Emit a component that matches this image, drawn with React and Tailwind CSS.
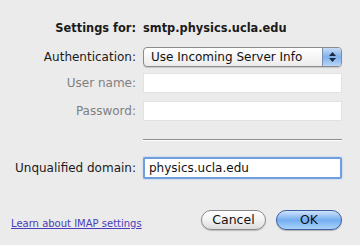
import React from 'react'

const Label = ({ children, dim }) => (
    <div className={`text-right text-[12px] leading-none pr-0 ${dim ? 'text-[#808080]' : 'text-[#1a1a1a]'}`}>{children}</div>
)

const App = () => {
    return (
        <main
            className="w-[360px] h-[245px] bg-[#ebebeb] relative overflow-hidden"
            style={{ fontFamily: '"DejaVu Sans", "Liberation Sans", sans-serif' }}
        >
            <div className="grid grid-cols-[136px_199px] gap-x-[7px] items-center pt-[21px]">
                {/* header */}
                <div className="text-right text-[11.4px] font-bold text-[#1a1a1a] h-[14px] leading-[14px]">Settings for:</div>
                <div className="text-[11.4px] font-bold text-[#1a1a1a] h-[14px] leading-[14px]">smtp.physics.ucla.edu</div>

                {/* authentication */}
                <div className="mt-[12px] text-right text-[12px] text-[#1a1a1a]">Authentication:</div>
                <div className="mt-[12px] h-[20px] flex rounded-[4px] border border-[#8c8c8c] bg-gradient-to-b from-white to-[#ececec] shadow-[0_1px_1px_rgba(0,0,0,0.15)] overflow-hidden">
                    <div className="flex-1 text-[12px] leading-[18px] pl-[7px] text-[#111]">Use Incoming Server Info</div>
                    <div className="w-[19px] border-l border-[#7b8fb5] bg-gradient-to-b from-[#c7dcf6] via-[#7fb0ea] to-[#b9d6f6] flex flex-col items-center justify-center gap-[2px]">
                        <svg width="7" height="4" viewBox="0 0 7 4"><path d="M3.5 0 L7 4 L0 4 Z" fill="#1b2a44" /></svg>
                        <svg width="7" height="4" viewBox="0 0 7 4"><path d="M0 0 L7 0 L3.5 4 Z" fill="#1b2a44" /></svg>
                    </div>
                </div>

                {/* user name */}
                <div className="mt-[6px]"><Label dim>User name:</Label></div>
                <div className="mt-[6px] h-[20px] bg-white border border-[#e2e2e2]" />

                {/* password */}
                <div className="mt-[8px]"><Label dim>Password:</Label></div>
                <div className="mt-[8px] h-[20px] bg-white border border-[#e2e2e2]" />

                {/* separator */}
                <div className="mt-[18px]" />
                <div className="mt-[18px] h-[1px] bg-[#8e8e8e] border-b border-white box-content" />

                {/* unqualified domain */}
                <div className="mt-[16px] text-right text-[12px] text-[#1a1a1a]">Unqualified domain:</div>
                <div className="mt-[16px] h-[22px] bg-white border-2 border-[#6f9fdc] rounded-[2px] shadow-[0_0_2px_#9cc0ee] text-[12px] leading-[18px] pl-[4px] text-[#111]">physics.ucla.edu</div>
            </div>

            <div className="flex items-center mt-[31px] pl-[11px] pr-[18px]">
                <a className="text-[10px] text-[#4a3cb8] underline flex-1 leading-none pt-[8px]">Learn about IMAP settings</a>
                <button className="w-[65px] h-[20px] rounded-full border border-[#8a8a8a] bg-gradient-to-b from-white via-[#f2f2f2] to-[#dcdcdc] text-[12.5px] text-[#111] leading-none shadow-[0_1px_1px_rgba(0,0,0,0.2)]">Cancel</button>
                <button className="ml-[10px] w-[66px] h-[20px] rounded-full border border-[#3c5fa0] bg-gradient-to-b from-[#cfe3fa] via-[#74aef0] to-[#a9d2fa] text-[12.5px] text-[#111] leading-none shadow-[0_1px_1px_rgba(0,0,0,0.25)]">OK</button>
            </div>
        </main>
    )
}

export default App
